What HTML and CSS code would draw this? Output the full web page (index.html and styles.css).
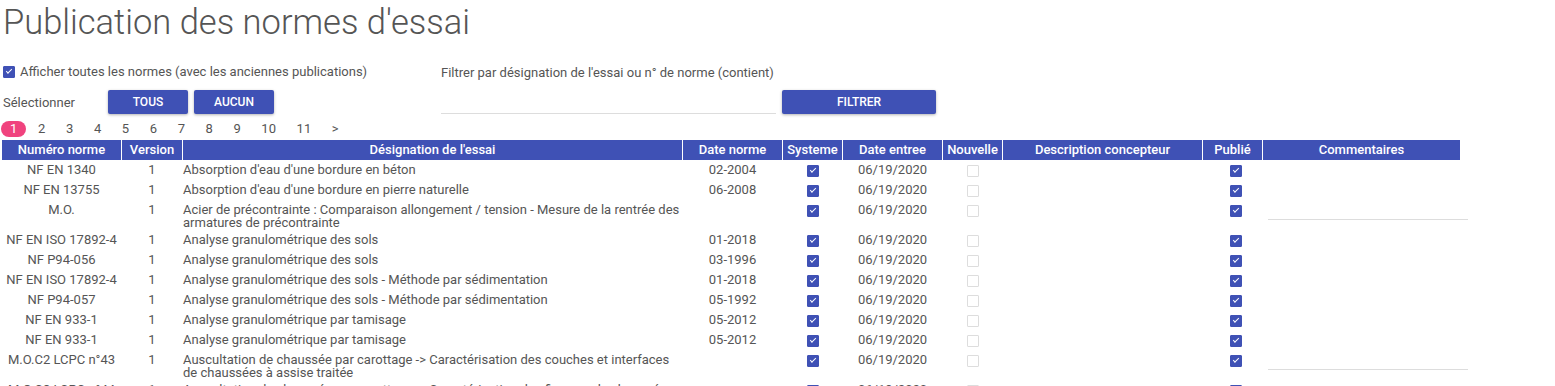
FILE: index.html
```html
<!DOCTYPE html>
<html lang="fr">
<head>
    <meta charset="UTF-8">
    <meta name="viewport" content="width=device-width, initial-scale=1.0">
    <title>Publication des normes d'essai</title>
    <link rel="stylesheet" href="styles.css">
</head>
<body>
    <h1 class="title">Publication des normes d'essai</h1>

    <div class="controls">
        <div class="options">
            <label class="show-all"><span class="cb on"></span>Afficher toutes les normes (avec les anciennes publications)</label>
            <div class="select-row">
                <span class="select-label">Sélectionner</span>
                <button class="btn btn-small">Tous</button>
                <button class="btn btn-small">Aucun</button>
            </div>
        </div>
        <div class="filter">
            <div class="filter-label">Filtrer par désignation de l'essai ou n° de norme (contient)</div>
            <div class="filter-row">
                <div class="filter-input"></div>
                <button class="btn btn-wide">Filtrer</button>
            </div>
        </div>
    </div>

    <div class="pager">
        <span class="page active">1</span>
        <span class="page">2</span>
        <span class="page">3</span>
        <span class="page">4</span>
        <span class="page">5</span>
        <span class="page">6</span>
        <span class="page">7</span>
        <span class="page">8</span>
        <span class="page">9</span>
        <span class="page">10</span>
        <span class="page">11</span>
        <span class="page">&gt;</span>
    </div>

    <table class="grid">
        <colgroup>
            <col class="c-num"><col class="c-ver"><col class="c-des"><col class="c-date">
            <col class="c-chk"><col class="c-date"><col class="c-chk"><col class="c-desc">
            <col class="c-chk"><col class="c-com">
        </colgroup>
        <thead>
            <tr>
                <th>Numéro norme</th>
                <th>Version</th>
                <th>Désignation de l'essai</th>
                <th>Date norme</th>
                <th>Systeme</th>
                <th>Date entree</th>
                <th>Nouvelle</th>
                <th>Description concepteur</th>
                <th>Publié</th>
                <th>Commentaires</th>
            </tr>
        </thead>
        <tbody>
            <tr>
                <td class="center">NF EN 1340</td><td class="center">1</td>
                <td>Absorption d'eau d'une bordure en béton</td>
                <td class="center">02-2004</td><td><span class="cb on"></span></td>
                <td class="center">06/19/2020</td><td><span class="cb"></span></td>
                <td></td><td class="pub"><span class="cb on"></span></td><td></td>
            </tr>
            <tr>
                <td class="center">NF EN 13755</td><td class="center">1</td>
                <td>Absorption d'eau d'une bordure en pierre naturelle</td>
                <td class="center">06-2008</td><td><span class="cb on"></span></td>
                <td class="center">06/19/2020</td><td><span class="cb"></span></td>
                <td></td><td class="pub"><span class="cb on"></span></td><td></td>
            </tr>
            <tr>
                <td class="center">M.O.</td><td class="center">1</td>
                <td>Acier de précontrainte : Comparaison allongement / tension - Mesure de la rentrée des armatures de précontrainte</td>
                <td class="center"></td><td><span class="cb on"></span></td>
                <td class="center">06/19/2020</td><td><span class="cb"></span></td>
                <td></td><td class="pub"><span class="cb on"></span></td><td><div class="comment"></div></td>
            </tr>
            <tr>
                <td class="center">NF EN ISO 17892-4</td><td class="center">1</td>
                <td>Analyse granulométrique des sols</td>
                <td class="center">01-2018</td><td><span class="cb on"></span></td>
                <td class="center">06/19/2020</td><td><span class="cb"></span></td>
                <td></td><td class="pub"><span class="cb on"></span></td><td></td>
            </tr>
            <tr>
                <td class="center">NF P94-056</td><td class="center">1</td>
                <td>Analyse granulométrique des sols</td>
                <td class="center">03-1996</td><td><span class="cb on"></span></td>
                <td class="center">06/19/2020</td><td><span class="cb"></span></td>
                <td></td><td class="pub"><span class="cb on"></span></td><td></td>
            </tr>
            <tr>
                <td class="center">NF EN ISO 17892-4</td><td class="center">1</td>
                <td>Analyse granulométrique des sols - Méthode par sédimentation</td>
                <td class="center">01-2018</td><td><span class="cb on"></span></td>
                <td class="center">06/19/2020</td><td><span class="cb"></span></td>
                <td></td><td class="pub"><span class="cb on"></span></td><td></td>
            </tr>
            <tr>
                <td class="center">NF P94-057</td><td class="center">1</td>
                <td>Analyse granulométrique des sols - Méthode par sédimentation</td>
                <td class="center">05-1992</td><td><span class="cb on"></span></td>
                <td class="center">06/19/2020</td><td><span class="cb"></span></td>
                <td></td><td class="pub"><span class="cb on"></span></td><td></td>
            </tr>
            <tr>
                <td class="center">NF EN 933-1</td><td class="center">1</td>
                <td>Analyse granulométrique par tamisage</td>
                <td class="center">05-2012</td><td><span class="cb on"></span></td>
                <td class="center">06/19/2020</td><td><span class="cb"></span></td>
                <td></td><td class="pub"><span class="cb on"></span></td><td></td>
            </tr>
            <tr>
                <td class="center">NF EN 933-1</td><td class="center">1</td>
                <td>Analyse granulométrique par tamisage</td>
                <td class="center">05-2012</td><td><span class="cb on"></span></td>
                <td class="center">06/19/2020</td><td><span class="cb"></span></td>
                <td></td><td class="pub"><span class="cb on"></span></td><td></td>
            </tr>
            <tr>
                <td class="center">M.O.C2 LCPC n°43</td><td class="center">1</td>
                <td>Auscultation de chaussée par carottage -&gt; Caractérisation des couches et interfaces de chaussées à assise traitée</td>
                <td class="center"></td><td><span class="cb on"></span></td>
                <td class="center">06/19/2020</td><td><span class="cb"></span></td>
                <td></td><td class="pub"><span class="cb on"></span></td><td><div class="comment"></div></td>
            </tr>
            <tr>
                <td class="center">M.O.C3 LCPC n°44</td><td class="center">1</td>
                <td>Auscultation de chaussée par carottage -&gt; Caractérisation des fissures de chaussées</td>
                <td class="center"></td><td><span class="cb on"></span></td>
                <td class="center">06/19/2020</td><td><span class="cb"></span></td>
                <td></td><td class="pub"><span class="cb on"></span></td><td></td>
            </tr>
        </tbody>
    </table>
</body>
</html>
```

FILE: styles.css
```css
body{
    margin: 0;
    height: 386px;
    overflow: hidden;
    font-family: Roboto, "Liberation Sans", sans-serif;
    font-size: 13px;
    color: #555;
    background: #fff;
}
.title{
    margin: 0;
    padding-left: 3px;
    font-size: 34.5px;
    font-weight: 300;
    line-height: 44px;
    color: #555;
}

/* checkbox look */
.cb{
    position: relative;
    display: block;
    box-sizing: border-box;
    width: 12px;
    height: 12px;
    margin: 2px auto 0;
    border: 1px solid #ddd;
    border-radius: 1px;
    background: #fff;
}
.cb.on{
    border-color: #3f51b5;
    background: #3f51b5;
}
.cb.on::after{
    content: '';
    position: absolute;
    left: 2px;
    top: 2px;
    width: 5px;
    height: 2px;
    border-left: 1.5px solid #fff;
    border-bottom: 1.5px solid #fff;
    transform: rotate(-45deg);
}

.controls{
    display: flex;
    margin-top: 20px;
    padding-left: 3px;
}
.options{
    width: 438px;
}
.show-all{
    display: flex;
    align-items: center;
    height: 16px;
    line-height: 16px;
}
.show-all .cb{
    display: inline-block;
    margin: 0 5px 0 0;
}
.select-row{
    display: flex;
    align-items: center;
    margin-top: 10px;
}
.select-label{
    width: 105px;
}
.btn{
    height: 24px;
    border: 0;
    border-radius: 2px;
    background: #3f51b5;
    color: #fff;
    font-family: Roboto, "Liberation Sans", sans-serif;
    font-size: 12px;
    font-weight: 500;
    text-transform: uppercase;
    box-shadow: 0 1px 3px rgba(0, 0, 0, .3);
    padding: 0;
}
.btn-small{
    width: 80px;
    margin-right: 6px;
}
.btn-wide{
    width: 154px;
}
.filter-label{
    height: 18px;
    line-height: 18px;
}
.filter-row{
    display: flex;
    align-items: flex-end;
    margin-top: 8px;
}
.filter-input{
    width: 335px;
    height: 23px;
    border-bottom: 1px solid #ddd;
    margin-right: 6px;
}

.pager{
    display: flex;
    align-items: center;
    margin-top: 6px;
    padding-left: 1px;
    height: 17px;
}
.page{
    padding: 0 10.3px;
    line-height: 16px;
}
.page.active{
    padding: 0 9px;
    margin-right: 1.5px;
    border-radius: 8px;
    background: #f0437e;
    color: #fff;
}

.grid{
    table-layout: fixed;
    width: 1460px;
    margin: 3px 0 0 1px;
    border-collapse: separate;
    border-spacing: 1px 0;
}
.c-num{ width: 119px; }
.c-ver{ width: 60px; }
.c-des{ width: 499px; }
.c-date{ width: 99px; }
.c-chk{ width: 59px; }
.c-desc{ width: 199px; }
.c-com{ width: 197px; }
.grid th{
    height: 20px;
    padding: 0;
    background: #3f51b5;
    color: #fff;
    font-weight: 500;
    text-align: center;
    line-height: 20px;
    white-space: nowrap;
}
.grid td{
    height: 16px;
    padding: 3px 0 1px;
    line-height: 13px;
    vertical-align: top;
}
.grid td.center{
    text-align: center;
}
.grid td.pub .cb{
    margin-left: 27px;
}
.comment{
    width: 200px;
    height: 16px;
    margin-left: 5px;
    border-bottom: 1px solid #ddd;
}
```
